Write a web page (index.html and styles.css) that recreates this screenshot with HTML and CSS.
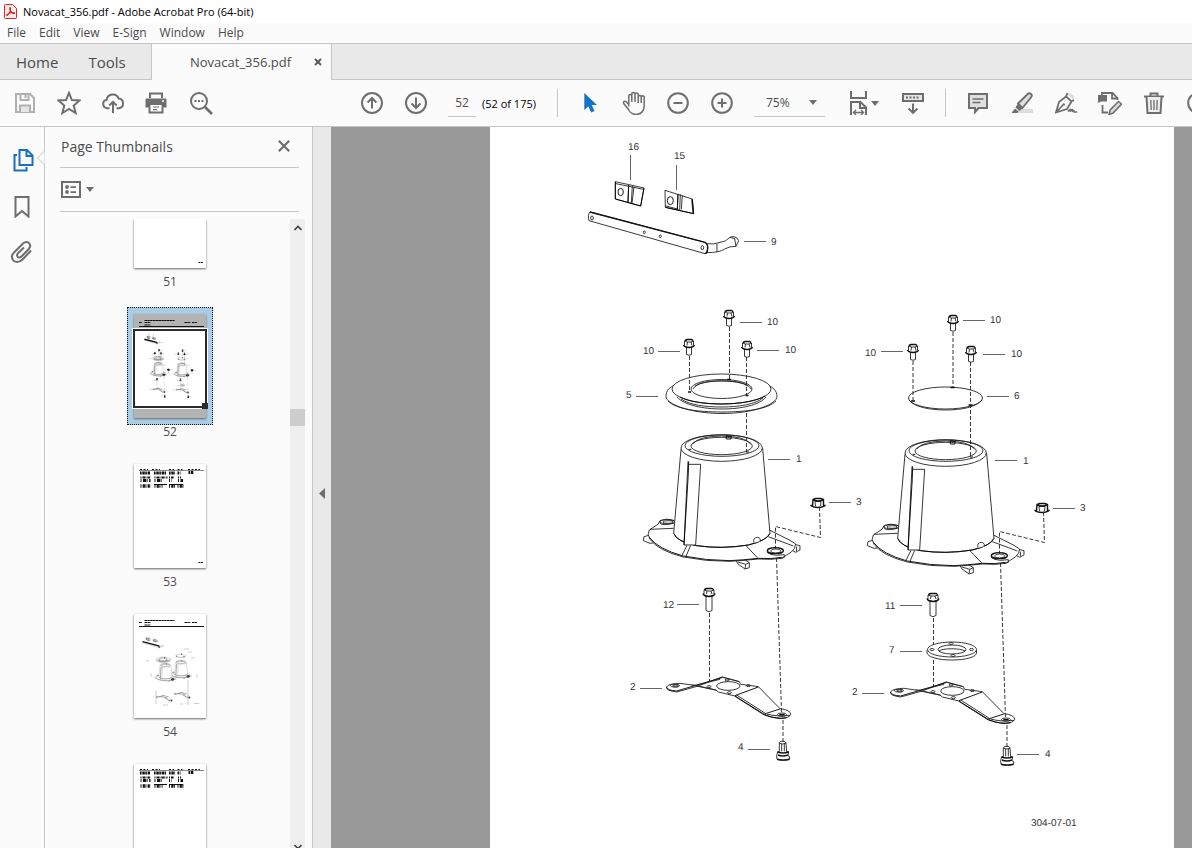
FILE: index.html
```html
<!DOCTYPE html>
<html lang="en">

<head>
    <meta charset="UTF-8">
    <meta name="viewport" content="width=device-width, initial-scale=1.0">
    <title>Novacat_356.pdf - Adobe Acrobat Pro (64-bit)</title>
    <link rel="stylesheet" href="styles.css">
</head>

<body>
    <!-- Title bar -->
    <header class="title-bar">
        <svg class="app-icon" viewBox="0 0 13 15">
            <path d="M1.5 .5h7l4 4v9a1 1 0 0 1-1 1h-10a1 1 0 0 1-1-1v-12a1 1 0 0 1 1-1z" fill="#fde9e7" stroke="#d5281f" />
            <path d="M3 11.5c2-1 4-5 3.400-7.500c-.4-1.200-1.200.2-.4 2c.8 2 2.500 3.500 4 3.600c1 0 .8-1.200-1-1.100c-2 .1-4.500.9-5.700 2c-.8.8-.7 1.200-.3 1z" fill="none" stroke="#d5281f" stroke-width="1.1" />
        </svg>
        <span>Novacat_356.pdf - Adobe Acrobat Pro (64-bit)</span>
    </header>

    <nav class="menu-bar">
        <button>File</button>
        <button>Edit</button>
        <button>View</button>
        <button>E-Sign</button>
        <button>Window</button>
        <button>Help</button>
    </nav>

    <!-- Tabs -->
    <div class="tabs">
        <div class="tabs-fixed">
            <button class="tab-link">Home</button>
            <button class="tab-link">Tools</button>
        </div>
        <div class="tab-active">
            <span>Novacat_356.pdf</span>
            <button class="tab-close" aria-label="Close tab">
                <svg viewBox="0 0 8 8"><path d="M1 1l6 6M7 1L1 7" stroke="#555" stroke-width="1.8" /></svg>
            </button>
        </div>
    </div>

    <!-- Toolbar -->
    <div class="toolbar">
        <div class="tool-group file-tools">
            <button class="tool" aria-label="Save">
                <svg class="icon pale" viewBox="0 0 24 24">
                    <path d="M3 3h14l4 4v14H3z" />
                    <path d="M7.500 3v6h8V3M12.500 4v3" />
                    <path d="M7 21v-6.500h10V21" fill="#e6e6e6" />
                </svg>
            </button>
            <button class="tool" aria-label="Star">
                <svg class="icon" viewBox="0 0 24 24">
                    <path d="M12 1.800l2.900 7.200l7.700.5l-5.900 5l1.900 7.500L12 17.900L5.400 22l1.900-7.500l-5.900-5l7.700-.5z" />
                </svg>
            </button>
            <button class="tool" aria-label="Upload">
                <svg class="icon" viewBox="0 0 24 24">
                    <path d="M8.500 17.200H6A4.300 4.300 0 0 1 5.700 8.700A6.200 6.200 0 0 1 17.600 7.500a4.900 4.900 0 0 1 .4 9.700h-2.500" />
                    <path d="M12 22v-11M8.300 14.500L12 10.800l3.700 3.700" />
                </svg>
            </button>
            <button class="tool" aria-label="Print">
                <svg class="icon" viewBox="1 0 24 24">
                    <path d="M6 7V2.500h12V7" />
                    <path d="M2.500 7.500h19a1 1 0 0 1 1 1v8h-21v-8a1 1 0 0 1 1-1z" fill="#6e6e6e" stroke="none" />
                    <path d="M5.500 13h13v8.500h-13z" fill="#fff" />
                    <path d="M9 16h6M9 18.600h4" stroke-width="1.200" />
                    <path d="M18 10h2" stroke="#fff" stroke-width="1.400" />
                </svg>
            </button>
            <button class="tool" aria-label="Find">
                <svg class="icon" viewBox="0 0 24 24">
                    <circle cx="10" cy="10" r="8" />
                    <path d="M16 16l7 7" stroke-width="2.600" />
                    <path d="M5.500 10h9" stroke-dasharray="2 1.500" />
                </svg>
            </button>
        </div>

        <div class="tool-group page-tools">
            <button class="tool" aria-label="Previous page">
                <svg class="icon" viewBox="0 0 24 24">
                    <circle cx="12" cy="12" r="10" />
                    <path d="M12 17.500V7.500M7.600 11.500L12 7l4.400 4.500" />
                </svg>
            </button>
            <button class="tool" aria-label="Next page">
                <svg class="icon" viewBox="0 0 24 24">
                    <circle cx="12" cy="12" r="10" />
                    <path d="M12 6.500v10M7.600 12.500L12 17l4.400-4.500" />
                </svg>
            </button>
            <input class="page-input" type="text" value="52" aria-label="Page number">
            <span class="page-count">(52 of 175)</span>
        </div>

        <div class="tool-group view-tools">
            <button class="tool" aria-label="Select">
                <svg class="icon" viewBox="0 0 24 24">
                    <path d="M6.300 2v17l4-3.500l2.900 6l3.300-1.500l-2.800-6h5.300z" fill="#1473c8" stroke="none" />
                </svg>
            </button>
            <button class="tool" aria-label="Pan">
                <svg class="icon" viewBox="0 0 24 24">
                    <path d="M6.800 15.500V5a1.500 1.500 0 0 1 3 0v6V3a1.500 1.500 0 0 1 3.200 0v8V3.500a1.500 1.500 0 0 1 3.200 0V12V6a1.500 1.500 0 0 1 3 0M19.200 6a1.500 1.500 0 0 1 3 1v8c0 5-3.500 8.500-8 8.500c-5 0-6.500-2.500-8-5.500l-4.500-5.500c-1-2 1.300-3 2.800-1.500l2.300 2.500M19.200 6v6" stroke-width="1.500" />
                </svg>
            </button>
            <button class="tool" aria-label="Zoom out">
                <svg class="icon" viewBox="0 0 24 24"><circle cx="12" cy="12" r="9.800" /><path d="M7.500 12h9" /></svg>
            </button>
            <button class="tool" aria-label="Zoom in">
                <svg class="icon" viewBox="0 0 24 24"><circle cx="12" cy="12" r="9.800" /><path d="M7.500 12h9M12 7.500v9" /></svg>
            </button>
            <div class="zoom-box">
                <select aria-label="Zoom level">
                    <option>75%</option>
                </select>
                <svg class="caret" viewBox="0 0 8 5"><path d="M0 0h8L4 5z" /></svg>
            </div>
            <button class="tool fit-tool" aria-label="Fit page">
                <svg class="icon" viewBox="0 0 24 24">
                    <path d="M4 0v7h15V0" />
                    <path d="M4 24V11h9.500l5.500 5.500V24M13 11v6h6" />
                    <path d="M7 21.500h9M9 19l-2.500 2.500L9 24M14 19l2.500 2.500L14 24" stroke-width="1.400" />
                </svg>
                <svg class="caret" viewBox="0 0 8 5"><path d="M0 0h8L4 5z" /></svg>
            </button>
            <button class="tool" aria-label="Scrolling">
                <svg class="icon" viewBox="0 0 24 24">
                    <path d="M2 3h20v7H2z" fill="#e6e6e6" />
                    <path d="M5 6.500h14" stroke-dasharray="2 1.500" />
                    <path d="M12 12.500v9M7.600 17.500l4.400 4.400l4.400-4.400" />
                </svg>
            </button>
        </div>

        <div class="tool-group edit-tools">
            <button class="tool" aria-label="Comment">
                <svg class="icon" viewBox="0 0 24 24">
                    <path d="M3 3h18v14h-8.500L9 21v-4H3z" fill="#e0e0e0" />
                    <path d="M6.500 8h11M6.500 11.500h8" stroke-width="1.400" />
                </svg>
            </button>
            <button class="tool" aria-label="Highlight">
                <svg class="icon" viewBox="0 0 24 24">
                    <path d="M10 18h13v4H5z" fill="#dcdcdc" stroke="none" />
                    <path d="M8 12.500L18 2.800c2-1.600 5 1 3.300 3.200L12.500 17z" fill="#dedede" stroke-width="1.800" />
                    <path d="M7.500 13l5 4.500l-3 2.500l-4-3.500z" fill="#6e6e6e" stroke="none" />
                    <path d="M5 17.500l3.500 3l-1 1.500H1.500z" fill="#6e6e6e" stroke="none" />
                </svg>
            </button>
            <button class="tool" aria-label="Sign">
                <svg class="icon" viewBox="0 0 24 24">
                    <path d="M13 3l7 6.500V5l-4-3z" fill="#dcdcdc" stroke="none" />
                    <path d="M13.500 2l-1.500 3.500l5.500 5L20 9M12 5.500L5 11L2 21.500l11-3.500l4.500-7.500M2 21.500l7-7.500" stroke-width="1.800" />
                    <circle cx="9.700" cy="13.400" r="1.200" fill="#6e6e6e" stroke="none" />
                    <path d="M14 20.500c2-3 3-3 2 .2c1.500-2.700 3-3 2.200 0c1.500-2 2-1.500 2 .3h3" stroke-width="1.600" />
                </svg>
            </button>
            <button class="tool" aria-label="Edit PDF">
                <svg class="icon" viewBox="0 0 24 24">
                    <path d="M4 7V2h10.500l5 5v2M14 2v5.500h5.500M4.500 14v7.500H10" stroke-width="1.800" />
                    <path d="M0 4h9v6.500H3L0 12z" fill="#6e6e6e" stroke="none" />
                    <path d="M20.500 10.500l3 2.500l-8.500 9l-4 1.500l1.200-4.500z" fill="#dedede" stroke-width="1.600" />
                </svg>
            </button>
            <button class="tool" aria-label="Delete">
                <svg class="icon" viewBox="0 0 24 24">
                    <path d="M2 5.500h20M8.500 5V2.500h7V5" />
                    <path d="M4.500 6l1 16h13l1-16" fill="#eee" />
                    <path d="M8.800 9l.4 10M12 9v10M15.200 9l-.4 10" stroke-width="1.300" />
                </svg>
            </button>
            <button class="tool" aria-label="Rotate">
                <svg class="icon" viewBox="0 0 24 24"><circle cx="12" cy="12" r="9.800" /></svg>
            </button>
        </div>
    </div>

    <main class="workspace">
        <!-- Navigation rail -->
        <nav class="rail">
            <button class="rail-btn" aria-label="Page thumbnails">
                <svg class="icon active" viewBox="0 0 24 24">
                    <path d="M9.500 2h7.500l5.500 5.500V17h-13zM16.500 2v6h6" />
                    <path d="M7 7H4.500v15.500h12V19" />
                </svg>
            </button>
            <button class="rail-btn" aria-label="Bookmarks">
                <svg class="icon" viewBox="0 0 24 24"><path d="M5.500 3h13v19.500L12 17L5.500 22.500z" /></svg>
            </button>
            <button class="rail-btn" aria-label="Attachments">
                <svg class="icon" viewBox="0 0 24 24">
                    <path d="M21 10.500l-8.500 9c-3.500 3.500-8 3-9.500.500c-1.800-2.500-1.500-5 1-7.500L13 3.500c2.500-2.300 5-1.700 6.200-.2c1.500 1.800 1.200 4-.7 6l-7 7.200c-1.500 1.500-3 1.200-3.800.3c-.9-1-.8-2.500.6-3.800L14 7.500" />
                </svg>
            </button>
            <svg class="notch" viewBox="0 0 8 16"><path d="M7.500 0v1L.5 8l7 7v1" /></svg>
        </nav>

        <!-- Page thumbnails panel -->
        <aside class="panel">
            <div class="panel-head">
                <h1>Page Thumbnails</h1>
                <button class="panel-close" aria-label="Close panel">
                    <svg viewBox="0 0 12 12"><path d="M.8.8l10.400 10.400M11.200.8L.8 11.200" stroke="#6e6e6e" stroke-width="2.200" /></svg>
                </button>
            </div>
            <div class="panel-options">
                <button aria-label="Options">
                    <svg class="options-icon" viewBox="0 0 20 17">
                        <path d="M1 1h18v15H1z" fill="none" stroke="#6e6e6e" stroke-width="2" />
                        <circle cx="6" cy="6" r="1.900" />
                        <circle cx="6" cy="11" r="1.900" />
                        <path d="M9.500 5.200H15v1.800H9.500zM9.500 10.200H15V12H9.500z" />
                    </svg>
                    <svg class="caret" viewBox="0 0 8 5"><path d="M0 0h8L4 5z" /></svg>
                </button>
            </div>
            <div class="panel-body">
                <ol class="thumbs">
                    <li class="thumb thumb-first">
                        <div class="thumb-box">
                            <svg class="thumb-page" viewBox="0 55 72 49"><path d="M64.500 98.500h2M67 98.500h2" stroke="#111" /></svg>
                        </div>
                        <span>51</span>
                    </li>
                    <li class="thumb selected">
                        <div class="thumb-box">
                            <svg class="thumb-page" viewBox="0 0 72 104">
                                <use href="#page-title" />
                                <rect x="0" y="16" width="72" height="77" fill="#fff" stroke="#fff" stroke-width="4" />
                                <rect x="0" y="16" width="72" height="77" fill="#fff" stroke="#2b2b2b" stroke-width="2" />
                                <use class="art small" href="#assembly" transform="translate(-51.500 3) scale(.105)" />
                                <rect x="68" y="89" width="6" height="6" fill="#2b2b2b" />
                            </svg>
                        </div>
                        <span>52</span>
                    </li>
                    <li class="thumb">
                        <div class="thumb-box">
                            <svg class="thumb-page" viewBox="0 0 72 104">
                                <use href="#parts-list" />
                                <path d="M64.500 98.500h2M67 98.500h2" stroke="#111" />
                            </svg>
                        </div>
                        <span>53</span>
                    </li>
                    <li class="thumb">
                        <div class="thumb-box">
                            <svg class="thumb-page" viewBox="0 0 72 104">
                                <use href="#page-title" />
                                <use class="art small" href="#blade" transform="translate(-74 -2) scale(.14)" />
                                <use class="art small" href="#hub" transform="translate(-50.500 -12) scale(.135)" />
                                <use class="art small" href="#hub" transform="translate(-66 -9) scale(.135)" />
                                <use class="art small" href="#ring" transform="translate(-68 -7.500) scale(.135)" />
                                <use class="art small" href="#cover" transform="translate(-81 -12) scale(.135)" />
                                <use class="art small" href="#arm" transform="translate(-68 -10) scale(.135)" />
                                <use class="art small" href="#arm" transform="translate(-50 -13) scale(.135)" />
                                <path d="M12 47h3M50 35h5M54 38h4M57 44h4M63 60v4M17 59v4M29 91h5M46 90h3M60 89.500h5M22 77v13M54 66v25" stroke="#999" stroke-width=".5" />
                            </svg>
                        </div>
                        <span>54</span>
                    </li>
                    <li class="thumb">
                        <div class="thumb-box">
                            <svg class="thumb-page" viewBox="0 0 72 104"><use href="#parts-list" /></svg>
                        </div>
                    </li>
                </ol>
                <div class="scrollbar">
                    <svg class="scroll-arrow" viewBox="0 0 8 6"><path d="M.5 5L4 1.500L7.500 5" /></svg>
                    <div class="scroll-track">
                        <div class="scroll-handle"></div>
                    </div>
                    <svg class="scroll-arrow" viewBox="0 0 8 6"><path d="M.5 3L4 6.500L7.500 3" /></svg>
                </div>
            </div>
        </aside>

        <button class="collapse" aria-label="Collapse panel">
            <svg viewBox="0 0 6 11"><path d="M6 0v11L0 5.500z" /></svg>
        </button>

        <!-- Document page -->
        <section class="document">
            <div class="page">
                <svg viewBox="490 127 684 721">
                    <defs>
                        <g id="page-title">
                            <path d="M5 8.500h3M10.500 6.500h30M10.500 8.500h6M10.500 11h6M50.500 8.500h6M58 8.500h5" stroke="#111" stroke-width="1.200" stroke-dasharray="2.500 .3" />
                            <path d="M5 12.500h65" stroke="#111" />
                        </g>
                        <g id="parts-list" fill="none" stroke="#111">
                            <path d="M6 5.500h8M18 5.500h8M35 5.500h5M43.500 5.500h5M54 5.500h12" stroke-width="1" stroke-dasharray="2 1.500" />
                            <path d="M5 6.500h65" stroke-width=".5" />
                            <path d="M6 9h10M20 9h12M35 9h6M43.500 9h3M54.500 8.500h5" stroke-width="3" stroke-dasharray="1.600 .7 2.500 .5" />
                            <path d="M6.500 13.500h10M20.500 13.500h13M35 13.500h5M44 13.500h3" stroke-width="2" stroke-dasharray="1 1 2.500 .4" />
                            <path d="M6.500 16.500h10M20.500 16.500h8M35 16.500h3M44 16.500h5" stroke-width="3" stroke-dasharray="1 1.500 3 .6" />
                            <path d="M6.500 22h10M20.500 22h8M35 22h6M43.500 22h6" stroke-width="3.500" stroke-dasharray="1 1.200 2.200 .5" />
                            <path d="M20 20.500h13M35 20.500h14" stroke-width="1" />
                        </g>

                        <g id="bolt" class="line-art">
                            <path d="M-2.500 8V15.500Q0 17 2.500 15.500V8" />
                            <path d="M-4.500 6.500V2L-2 .5H2.500L4.500 2V6.500M-2 6.500L-1.500 3L2 3L3 6.500M-4.500 2L-1.500 3M2 3L4.500 2" />
                            <path class="thick" d="M-5.500 6Q-5 8 0 8.500Q5 8 5.500 6M-4 1.500L-2 .5H2.500L4 1.500" />
                        </g>
                        <g id="long-bolt" class="line-art">
                            <path d="M-3 8V22.500Q0 25 3 22.500V8" />
                            <path d="M-5 6V2L-2.500 .5H3L5 2V6M-2.500 6L-2 3L2 3L3 6M-5 2L-2 3M2 3L5 2" />
                            <path class="thick" d="M-6 5.500Q-5.500 8 0 8.500Q5.500 8 6 5.500M-4.500 1.500L-2.500 .5H3L4.500 1.500" />
                        </g>
                        <g id="nut" class="line-art">
                            <path d="M-2.500 6L-3 1.500H3L2.500 6" />
                            <path class="thick" d="M-5.500 6L-5-.5L-2.500-1.500H3L5.500-.5L5.500 6M-7.500 5Q-5 7.500 0 7.500Q5 7.500 7.500 5M-4.500 0Q0 2 5 0" />
                        </g>

                        <!-- Straight bracket with the hooked end and its two clips -->
                        <g id="blade" class="line-art" transform="translate(570 130) scale(.3333)">
                            <path d="M136 155L222 174L212 228L136 207zM138 161L220 178M176 166L174 216M187 168L184 220M192 170L186 220" />
                            <ellipse class="heavy" cx="152" cy="186" rx="8" ry="11" />
                            <path d="M285 181L367 207L371 251L286 232zM286 227L325 238M324 192L322 240M331 193L329 242M337 197L334 238M365 208L369 249" />
                            <ellipse class="heavy" cx="301" cy="212" rx="9" ry="12" />
                            <path class="heavy" d="M136 155V207L212 228L222 174M176 166L174 216M286 232L371 251L367 207M324 192L322 240" />
                            <path d="M60 246L405 337M57 272L405 371M60 246Q52 255 57 272M405 337Q416 342 412 362Q411 370 405 371" />
                            <path class="thick" d="M60 246L405 337Q416 342 412 362Q411 370 405 371" />
                            <path d="M412 341Q432 344 447 338Q468 336 480 322Q488 317 500 323L506 332L498 349Q480 348 464 357Q450 368 408 368M441 342V366M480 322L494 326L498 349" />
                            <ellipse cx="66" cy="264" rx="4" ry="6" />
                            <ellipse cx="223" cy="307" rx="3" ry="4" />
                            <ellipse cx="271" cy="319" rx="3" ry="4" />
                            <ellipse cx="397" cy="353" rx="4" ry="6" />
                        </g>

                        <g id="ring" class="line-art">
                            <path class="solid" d="M666 396.500C666 404 690 413.500 722 413.500S777 404 777 396.500C777 390 772 387 768 385H675C670 387 666 390 666 396.500z" />
                            <path d="M668 401C676 409 697 412 722 412S768 409 776 401" />
                            <path d="M677 397C684 405 703 409 722 409S760 405 766 397M681 399C690 405 705 407 722 407S756 404 763 398" />
                            <ellipse class="solid" cx="721.500" cy="389" rx="49.500" ry="15" />
                            <path class="heavy" d="M680 397C690 402 705 404 722 404S757 401 765 396" />
                            <ellipse cx="721.500" cy="389" rx="30.500" ry="9.500" />
                            <path d="M693 389C696 383 708 381 722 381S748 383 751 389M695 386C705 379 738 379 748 386" />
                            <path class="thick" d="M688 392h3M727 379.500h4M745.500 395.500h3" />
                        </g>
                        <g id="cover" class="line-art">
                            <ellipse class="solid" cx="945.500" cy="398" rx="37" ry="11" />
                            <path d="M909 400C914 407 930 410 946 410S976 407 982 400" />
                            <path class="thick" d="M911 401h4M950.500 387.500h4M968.500 405h4" />
                        </g>

                        <g id="hub" class="line-art" transform="translate(630 420) scale(.3333)">
                            <!-- Lugs under the flange -->
                            <path class="solid" d="M60 345L42 350L40 362L60 370L75 368M497 374L510 377V390L497 397L488 392" />
                            <path class="solid" d="M318 421L324 432L345 447L358 443V428L345 420M345 447L347 433L358 428M347 433L324 426M500 380L499 394" />
                            <!-- Flange -->
                            <path class="solid" d="M133 303L112 298L90 302L85 312L58 330Q50 342 60 358Q85 392 160 411Q230 425 300 424Q340 422 385 417Q425 420 455 415Q470 405 484 396Q497 385 497 372L480 361L418 330z" />
                            <path class="heavy" d="M58 352Q85 388 160 408Q230 422 300 422Q340 420 385 415Q425 418 455 412" />
                            <path d="M60 328L131 325M90 303Q88 315 105 314L131 310M182 376L168 409M171 376L156 406M347 376L385 416M415 350L490 378" />
                            <ellipse cx="112" cy="305" rx="22" ry="7" />
                            <ellipse cx="114" cy="306" rx="15" ry="4" />
                            <ellipse class="thick" cx="436" cy="392" rx="24" ry="9" />
                            <ellipse cx="437" cy="393" rx="15" ry="6" />
                            <path d="M411 397Q420 405 440 406L463 404V412L450 416" />
                            <!-- Cone -->
                            <path class="solid" d="M153 88L131 340Q140 365 200 377Q275 388 355 375Q410 362 420 340L398 85z" />
                            <path class="heavy" d="M131 340Q140 365 200 377Q275 388 355 375Q410 362 420 340" />
                            <ellipse class="solid" cx="275" cy="84" rx="122" ry="40" />
                            <ellipse cx="276" cy="77" rx="111" ry="32" />
                            <ellipse cx="275" cy="78" rx="92" ry="26" />
                            <path d="M188 72Q205 49 275 48Q345 49 362 72" />
                            <path class="heavy" d="M289 47V57H303V49zM176 88h8M348 96h9" />
                            <path class="solid" d="M176 133H212L197 375H162L174 124" />
                            <path class="heavy" d="M176 124L175 160L162 375" />
                            <path class="solid" d="M372 368Q368 353 382 352Q394 354 390 364" />
                        </g>

                        <g id="arm" class="line-art" transform="translate(620 580) scale(.3333)">
                            <path class="solid" d="M140 320Q150 310 180 310L215 315L240 316L306 291L358 305L362 313L415 320L480 386Q512 390 512 403Q508 415 480 416Q455 414 433 403L345 348L295 336L288 330L235 318L170 336Q135 332 140 320z" />
                            <path class="heavy" d="M140 322Q142 331 170 333L306 293M345 347L415 321M345 349L433 405Q470 418 500 413M433 402L480 387" />
                            <path d="M306 291L358 305M215 315L290 331M350 345L436 400M440 402Q470 411 510 406M235 314L300 298" />
                            <ellipse cx="165" cy="317" rx="14" ry="4" />
                            <ellipse cx="167" cy="318" rx="9" ry="3" />
                            <ellipse cx="325" cy="318" rx="35" ry="13" />
                            <ellipse cx="321" cy="300" rx="6" ry="3" />
                            <ellipse cx="267" cy="320" rx="6" ry="3" />
                            <ellipse cx="385" cy="317" rx="6" ry="3" />
                            <ellipse cx="328" cy="338" rx="6" ry="3" />
                            <ellipse cx="486" cy="404" rx="14" ry="5" />
                            <path class="thick" d="M478 404h16" />
                        </g>

                        <g id="pin" class="line-art" transform="translate(620 580) scale(.3333)">
                            <path class="solid" d="M470 527L473 515H478V488L483 484H493L498 488L500 515H506L504 527L509 530V537Q489 544 471 537z" />
                            <path class="thick" d="M473 516Q489 522 506 516M474 525Q489 531 504 525M471 538Q489 543 509 538" />
                            <path d="M478 490Q488 494 498 490M485 492V514M493 491V514" />
                        </g>

                        <!-- Everything that both assemblies share -->
                        <g id="rig">
                            <g class="line-art dashes">
                                <path d="M709.500 613V686" />
                            </g>
                            <use href="#hub" />
                            <use href="#arm" />
                            <use href="#pin" />
                            <use href="#nut" x="818" y="500" />
                            <use href="#long-bolt" x="709" y="588" />
                            <use href="#bolt" x="729" y="310" />
                            <use href="#bolt" x="689" y="339" />
                            <use href="#bolt" x="747" y="341" />
                            <g class="line-art dashes">
                                <path d="M819.500 507L820.500 537.500L775.500 526.500V549" />
                                <path d="M776.500 558L781.500 712M783 720V742" />
                            </g>
                        </g>

                        <g id="assembly">
                            <use href="#blade" />
                            <use href="#rig" />
                            <use href="#rig" x="224" y="5" />
                            <use href="#ring" />
                            <use href="#cover" />
                            <g class="line-art">
                                <path class="solid" d="M927 650V653C928 657 938 660 952 660S976 657 976.500 653V650" />
                                <ellipse class="solid" cx="952" cy="649.500" rx="24.500" ry="7.500" />
                                <ellipse cx="952" cy="649.500" rx="14" ry="4.500" />
                                <path d="M939 651C942 648 961 648 965 651" />
                                <ellipse cx="951" cy="643.500" rx="2" ry="1" />
                                <ellipse cx="932" cy="649.500" rx="2" ry="1" />
                                <ellipse cx="971.500" cy="649.500" rx="2" ry="1" />
                                <ellipse cx="953" cy="655.500" rx="2" ry="1" />
                            </g>
                            <g class="line-art dashes">
                                <path d="M689.500 356V392M729.500 327V380M746.500 357V396M746.500 413V452" />
                                <path d="M913 361V401M953 332V387M970.500 362V456" />
                            </g>
                            <g class="line-art leaders">
                                <path d="M630.500 155V180M676.500 165V190M744 241.500H766" />
                                <path d="M740 322.500H762M658 351.500H680M757 350.500H779M636 396.500H658" />
                                <path d="M768 459.500H790M829 502.500H851M677 604.500H699M640 688.500H662M748 749.500H770" />
                                <path d="M963 320.500H985M881 351.500H903M983 354.500H1005M987 396.500H1009" />
                                <path d="M995 460.500H1017M1053 508.500H1075M900 605.500H922M900 651.500H922M862 693.500H884M1017 754.500H1039" />
                            </g>
                        </g>
                    </defs>

                    <use class="art" href="#assembly" />

                    <g class="callouts">
                        <text x="628" y="150">16</text>
                        <text x="674" y="159">15</text>
                        <text x="771" y="245">9</text>
                        <text x="767" y="325">10</text>
                        <text x="643" y="354">10</text>
                        <text x="785" y="353">10</text>
                        <text x="626" y="398">5</text>
                        <text x="796" y="462">1</text>
                        <text x="856" y="505">3</text>
                        <text x="663" y="608">12</text>
                        <text x="630" y="690">2</text>
                        <text x="738" y="750">4</text>
                        <text x="990" y="323">10</text>
                        <text x="865" y="356">10</text>
                        <text x="1011" y="357">10</text>
                        <text x="1014" y="399">6</text>
                        <text x="1023" y="464">1</text>
                        <text x="1080" y="511">3</text>
                        <text x="885" y="609">11</text>
                        <text x="889" y="653">7</text>
                        <text x="852" y="695">2</text>
                        <text x="1045" y="757">4</text>
                        <text x="1031" y="826">304-07-01</text>
                    </g>
                </svg>
            </div>
        </section>
    </main>
</body>

</html>
```

FILE: styles.css
```css
* {
    box-sizing: border-box;
}

body {
    font-family: "Open Sans", "Noto Sans", sans-serif;
    font-size: 12px;
    color: #4b4b4b;
    background-color: #fbfbfb;
    margin: 0;
    height: 100vh;
    display: flex;
    flex-direction: column;
    overflow: hidden;
}

button,
input,
select {
    font: inherit;
    color: inherit;
    background: none;
    border: none;
    border-radius: 0;
    margin: 0;
    padding: 0;
}

svg {
    display: block;
    flex-shrink: 0;
}

/* Title and menu */
.title-bar {
    display: flex;
    align-items: center;
    gap: 6px;
    height: 23px;
    flex-shrink: 0;
    padding-left: 4px;
    background-color: #fff;
    color: #000;
    font-size: 11px;
}

.app-icon {
    width: 13px;
    height: 15px;
}

.menu-bar {
    display: flex;
    gap: 13px;
    height: 20px;
    flex-shrink: 0;
    padding: 0 0 2px 7px;
}

/* Tabs */
.tabs {
    display: flex;
    height: 37px;
    flex-shrink: 0;
    background-color: #e9e9e9;
    border-top: 1px solid #c6c6c6;
    border-bottom: 1px solid #c6c6c6;
    font-size: 15px;
}

.tabs-fixed {
    display: flex;
    gap: 30px;
    width: 152px;
    padding-left: 16px;
    border-right: 1px solid #c6c6c6;
}

.tab-active {
    display: flex;
    align-items: center;
    justify-content: space-between;
    width: 180px;
    height: 36px;
    padding: 0 9px 0 38px;
    background-color: #fbfbfb;
    border-right: 1px solid #c6c6c6;
    font-size: 13px;
}

.tab-close svg {
    width: 8px;
    height: 8px;
}

/* Toolbar */
.toolbar {
    display: flex;
    align-items: center;
    height: 47px;
    flex-shrink: 0;
    border-bottom: 1px solid #c6c6c6;
}

.tool-group {
    display: flex;
    align-items: center;
    height: 28px;
    flex-shrink: 0;
}

.tool {
    display: flex;
    align-items: center;
    justify-content: center;
    width: 44px;
    height: 28px;
    flex-shrink: 0;
}

.icon {
    width: 24px;
    height: 24px;
    fill: none;
    stroke: #6e6e6e;
    stroke-width: 2;
}

.icon.pale {
    stroke: #b0b0b0;
}

.icon.active {
    stroke: #1b6fbe;
}

.caret {
    width: 8px;
    height: 5px;
    fill: #6e6e6e;
}

.file-tools {
    padding-left: 3px;
}

.page-tools {
    width: 208px;
    margin-left: 127px;
    border-right: 1px solid #c6c6c6;
}

.page-input {
    width: 28px;
    height: 28px;
    margin-left: 10px;
    border-bottom: 1px solid #c6c6c6;
    text-align: center;
}

.page-count {
    margin-left: 6px;
    color: #000;
    font-size: 11px;
    white-space: nowrap;
}

.view-tools {
    width: 388px;
    padding-left: 10px;
    border-right: 1px solid #c6c6c6;
}

.zoom-box {
    display: flex;
    align-items: center;
    width: 71px;
    height: 28px;
    margin: 0 10px;
    padding-right: 8px;
    border-bottom: 1px solid #c6c6c6;
}

.zoom-box select {
    flex: 1;
    height: 27px;
    padding-left: 12px;
    appearance: none;
}

.fit-tool {
    width: 56px;
    gap: 0;
}

.edit-tools {
    padding-left: 10px;
}

/* Workspace */
.workspace {
    display: flex;
    flex: 1;
    min-height: 0;
}

.rail {
    position: relative;
    display: flex;
    flex-direction: column;
    align-items: center;
    gap: 22px;
    width: 45px;
    flex-shrink: 0;
    padding-top: 21px;
    border-right: 1px solid #c6c6c6;
}

.notch {
    position: absolute;
    top: 23px;
    right: -1px;
    width: 8px;
    height: 16px;
    fill: #fbfbfb;
    stroke: #c6c6c6;
}

.panel {
    display: flex;
    flex-direction: column;
    width: 268px;
    flex-shrink: 0;
    border-right: 1px solid #c6c6c6;
}

.panel-head,
.panel-options {
    display: flex;
    align-items: center;
    margin: 0 13px 0 15px;
    border-bottom: 1px solid #c6c6c6;
}

.panel-head {
    justify-content: space-between;
    height: 41px;
    padding: 0 9px 2px 1px;
}

.panel-head h1 {
    margin: 0;
    font-size: 14px;
    font-weight: normal;
}

.panel-close svg {
    width: 12px;
    height: 12px;
}

.panel-options {
    height: 44px;
    padding-left: 1px;
}

.panel-options button {
    display: flex;
    align-items: center;
    gap: 5px;
}

.options-icon {
    width: 20px;
    height: 17px;
    fill: #6e6e6e;
}

.panel-body {
    display: flex;
    flex: 1;
    min-height: 0;
    margin-top: 7px;
}

.thumbs {
    display: flex;
    flex: 1;
    flex-direction: column;
    align-items: center;
    margin: 0;
    padding: 0 0 0 5px;
    overflow: hidden;
    list-style: none;
}

.thumb {
    display: flex;
    flex-direction: column;
    align-items: center;
    flex-shrink: 0;
    margin-bottom: 18px;
    line-height: 14px;
}

.thumb-box {
    padding: 6px;
    border: 1px solid transparent;
}

.thumb-page {
    width: 72px;
    height: 104px;
    background-color: #fff;
    box-shadow: 0 1px 2px #666;
    overflow: visible;
}

/* The list is scrolled so that only the foot of this page shows */
.thumb-first .thumb-box {
    padding-top: 0;
    border-top: none;
}

.thumb-first .thumb-page {
    height: 49px;
}

.selected .thumb-box {
    background-color: #a9cde4;
    border: 1px dotted #111;
}

.selected .thumb-page {
    background-color: #b3b3b3;
}

.scrollbar {
    display: flex;
    flex-direction: column;
    align-items: center;
    width: 15px;
    margin-right: 7px;
    padding-top: 6px;
    background-color: #efefef;
}

.scroll-arrow {
    width: 8px;
    height: 6px;
    fill: none;
    stroke: #444;
    stroke-width: 1.6;
}

.scroll-track {
    flex: 1;
    width: 100%;
    padding-top: 178px;
}

.scroll-handle {
    height: 17px;
    background-color: #cdcdcd;
}

.collapse {
    display: flex;
    align-items: center;
    justify-content: center;
    width: 18px;
    flex-shrink: 0;
    padding-top: 12px;
    background-color: #e9e9e9;
}

.collapse svg {
    width: 6px;
    height: 11px;
    fill: #6e6e6e;
}

/* Document */
.document {
    flex: 1;
    padding: 0 18px 0 159px;
    background-color: #999;
    overflow: hidden;
}

.page {
    min-height: 100%;
    background-color: #fff;
}

.page svg {
    width: 100%;
    height: auto;
}

.art {
    fill: none;
    stroke: #222;
    stroke-width: 0.9;
}

.art.small {
    stroke: #777;
    stroke-width: 0.25;
}

.line-art path,
.line-art ellipse {
    vector-effect: non-scaling-stroke;
}

.line-art .solid {
    fill: #fff;
}

.line-art .heavy {
    stroke: #000;
}

.line-art .thick {
    stroke: #111;
    stroke-width: 1.4;
}

.dashes {
    stroke-dasharray: 4 2;
}

.leaders {
    stroke: #555;
}

.callouts {
    font-family: "Liberation Sans", Arial, sans-serif;
    font-size: 10px;
    fill: #333;
    text-rendering: geometricPrecision;
}
```
